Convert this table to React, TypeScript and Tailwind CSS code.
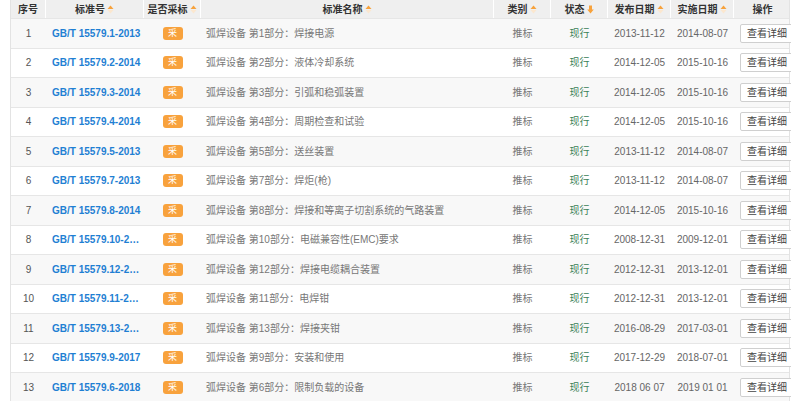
import React from 'react';

type Row = { no: number; code: string; name: string; pub: string; impl: string };

const rows: Row[] = [
  { no: 1, code: 'GB/T 15579.1-2013', name: '弧焊设备 第1部分：焊接电源', pub: '2013-11-12', impl: '2014-08-07' },
  { no: 2, code: 'GB/T 15579.2-2014', name: '弧焊设备 第2部分：液体冷却系统', pub: '2014-12-05', impl: '2015-10-16' },
  { no: 3, code: 'GB/T 15579.3-2014', name: '弧焊设备 第3部分：引弧和稳弧装置', pub: '2014-12-05', impl: '2015-10-16' },
  { no: 4, code: 'GB/T 15579.4-2014', name: '弧焊设备 第4部分：周期检查和试验', pub: '2014-12-05', impl: '2015-10-16' },
  { no: 5, code: 'GB/T 15579.5-2013', name: '弧焊设备 第5部分：送丝装置', pub: '2013-11-12', impl: '2014-08-07' },
  { no: 6, code: 'GB/T 15579.7-2013', name: '弧焊设备 第7部分：焊炬(枪)', pub: '2013-11-12', impl: '2014-08-07' },
  { no: 7, code: 'GB/T 15579.8-2014', name: '弧焊设备 第8部分：焊接和等离子切割系统的气路装置', pub: '2014-12-05', impl: '2015-10-16' },
  { no: 8, code: 'GB/T 15579.10-2008', name: '弧焊设备 第10部分：电磁兼容性(EMC)要求', pub: '2008-12-31', impl: '2009-12-01' },
  { no: 9, code: 'GB/T 15579.12-2012', name: '弧焊设备 第12部分：焊接电缆耦合装置', pub: '2012-12-31', impl: '2013-12-01' },
  { no: 10, code: 'GB/T 15579.11-2012', name: '弧焊设备 第11部分：电焊钳', pub: '2012-12-31', impl: '2013-12-01' },
  { no: 11, code: 'GB/T 15579.13-2016', name: '弧焊设备 第13部分：焊接夹钳', pub: '2016-08-29', impl: '2017-03-01' },
  { no: 12, code: 'GB/T 15579.9-2017', name: '弧焊设备 第9部分：安装和使用', pub: '2017-12-29', impl: '2018-07-01' },
  { no: 13, code: 'GB/T 15579.6-2018', name: '弧焊设备 第6部分：限制负载的设备', pub: '2018 06 07', impl: '2019 01 01' },
];

function SortUp() {
  return (
    <svg width="7" height="9" viewBox="0 0 7 9" className="ml-[2px] inline-block">
      <path d="M0.5 4 L3.5 0.5 L6.5 4 Z" fill="#f7a23c" />
      <path d="M0.5 5 L3.5 8.5 L6.5 5 Z" fill="#fbe7cf" />
    </svg>
  );
}

function SortDown() {
  return (
    <svg width="7" height="9" viewBox="0 0 7 9" className="ml-[2px] inline-block">
      <path d="M2 0.5 H5 V4.5 H6.8 L3.5 8.5 L0.2 4.5 H2 Z" fill="#f7a23c" />
    </svg>
  );
}

const cols = [
  { title: '序号', w: 'w-[35px]', sort: null },
  { title: '标准号', w: 'w-[98px]', sort: 'up' },
  { title: '是否采标', w: 'w-[57px]', sort: 'up' },
  { title: '标准名称', w: 'w-[293px]', sort: 'up' },
  { title: '类别', w: 'w-[57px]', sort: 'up' },
  { title: '状态', w: 'w-[57px]', sort: 'down' },
  { title: '发布日期', w: 'w-[63px]', sort: 'up' },
  { title: '实施日期', w: 'w-[63px]', sort: 'up' },
  { title: '操作', w: 'w-[57px]', sort: null },
];

export default function App() {
  return (
    <div
      className="h-[401px] w-[799px] overflow-hidden bg-white pl-[10px]"
      style={{ fontFamily: '"Liberation Sans", "Noto Sans CJK SC", sans-serif' }}
    >
      <div className="w-[780px] border-x border-[#e3e3e3]">
        <div className="flex h-[18px] bg-[#efefef] text-[10px] font-bold text-[#333]">
          {cols.map((c, i) => (
            <div
              key={c.title}
              className={`${c.w} flex shrink-0 items-center justify-center ${i < cols.length - 1 ? 'border-r border-white' : ''}`}
            >
              {c.title}
              {c.sort === 'up' && <SortUp />}
              {c.sort === 'down' && <SortDown />}
            </div>
          ))}
        </div>
        {rows.map(r => (
          <div
            key={r.no}
            className={`flex h-[29.5px] items-center border-t border-[#e6e6e6] text-[10px] ${r.no % 2 === 1 ? 'bg-[#f8f8f8]' : 'bg-white'}`}
          >
            <div className="w-[35px] shrink-0 text-center text-[#555]">{r.no}</div>
            <div className="w-[98px] shrink-0 truncate pl-[6px] pr-[2px] font-bold text-[#1f7fd3]">{r.code}</div>
            <div className="flex w-[57px] shrink-0 justify-center">
              <span className="flex h-[13px] w-[20px] items-center justify-center rounded-[3px] bg-[#f8a23d] text-[9px] text-white">采</span>
            </div>
            <div className="w-[293px] shrink-0 truncate pl-[5px] text-[#777]">{r.name}</div>
            <div className="w-[57px] shrink-0 text-center text-[#777]">推标</div>
            <div className="w-[57px] shrink-0 text-center text-[#3a8157]">现行</div>
            <div className="w-[63px] shrink-0 text-center text-[#666]">{r.pub}</div>
            <div className="w-[63px] shrink-0 text-center text-[#666]">{r.impl}</div>
            <div className="w-[57px] shrink-0 overflow-hidden pl-[6px]">
              <button className="h-[19px] w-[56px] rounded-[2px] border border-[#cfcfcf] bg-white pl-[6px] text-left text-[10px] text-[#444]">
                查看详细
              </button>
            </div>
          </div>
        ))}
      </div>
    </div>
  );
}
